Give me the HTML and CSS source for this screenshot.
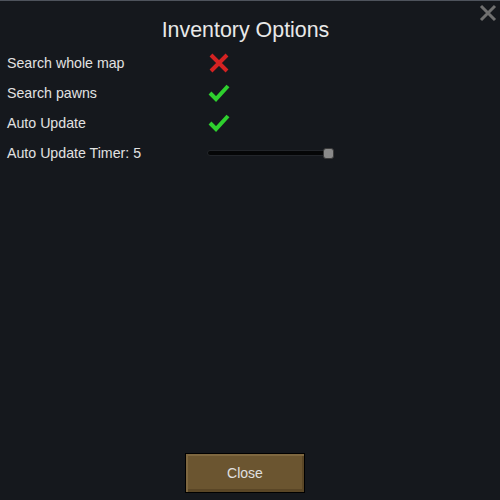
FILE: index.html
```html
<!DOCTYPE html>
<html>
<head>
<meta charset="utf-8">
<link rel="stylesheet" href="styles.css">
</head>
<body>
<div class="window">
  <svg class="close-x" viewBox="0 0 18 18" width="18" height="18"><path d="M2 2 L16 16 M16 2 L2 16" stroke="#707070" stroke-width="3" fill="none"/></svg>
  <h1 class="title">Inventory Options</h1>
  <div class="rows">
    <div class="row">
      <span class="label">Search whole map</span>
      <svg class="icon" viewBox="0 0 22 20" width="22" height="20"><path d="M3 2 L19 18 M19 2 L3 18" stroke="#d42222" stroke-width="4" fill="none"/></svg>
    </div>
    <div class="row">
      <span class="label">Search pawns</span>
      <svg class="icon" viewBox="0 0 22 20" width="22" height="20"><path d="M2 10 L8 16 L20 3" stroke="#2ed02e" stroke-width="4" fill="none"/></svg>
    </div>
    <div class="row">
      <span class="label">Auto Update</span>
      <svg class="icon" viewBox="0 0 22 20" width="22" height="20"><path d="M2 10 L8 16 L20 3" stroke="#2ed02e" stroke-width="4" fill="none"/></svg>
    </div>
    <div class="row">
      <span class="label">Auto Update Timer: 5</span>
      <div class="slider"><div class="track"></div><div class="thumb"></div></div>
    </div>
  </div>
  <div class="footer">
    <button class="btn">Close</button>
  </div>
</div>
</body>
</html>
```
FILE: styles.css
```css
html, body {
  margin: 0;
  padding: 0;
  background: #15181d;
}
body {
  font-family: "Liberation Sans", Arial, sans-serif;
  color: #e2e2e2;
}
.window {
  position: relative;
  box-sizing: border-box;
  height: 500px;
  border-top: 1px solid #4e535c;
  display: flex;
  flex-direction: column;
}
.close-x {
  position: absolute;
  top: 3px;
  right: 3px;
}
.title {
  margin: 0;
  padding: 15px 9px 0 0;
  height: 32px;
  font-size: 21.4px;
  font-weight: normal;
  text-align: center;
  line-height: 28px;
  color: #e8e8e8;
}
.rows {
  display: flex;
  flex-direction: column;
}
.row {
  display: grid;
  grid-template-columns: 200px 1fr;
  align-items: center;
  height: 30px;
  padding-left: 7px;
}
.label {
  font-size: 14.2px;
  line-height: 16px;
}
.icon {
  display: block;
  margin-left: 1px;
}
.slider {
  position: relative;
  width: 127px;
  height: 11px;
}
.track {
  position: absolute;
  left: 0;
  right: 2px;
  top: 2px;
  height: 6px;
  background: #050607;
  border: 1px solid #22252a;
  border-radius: 4px;
  box-sizing: border-box;
}
.thumb {
  position: absolute;
  right: 0;
  top: 0;
  width: 11px;
  height: 11px;
  box-sizing: border-box;
  background: #8a8a8a;
  border: 1px solid #3a3a3a;
  border-radius: 3px;
}
.footer {
  margin-top: auto;
  padding: 0 10px 7px 0;
  display: flex;
  justify-content: center;
}
.btn {
  width: 120px;
  height: 40px;
  box-sizing: border-box;
  border: 1px solid #000;
  background: #6b5530;
  box-shadow: inset 2px 2px 0 #7e6740, inset -2px -3px 0 #5a4626;
  color: #e0e0e0;
  font-family: "Liberation Sans", Arial, sans-serif;
  font-size: 14px;
  padding: 0;
}
```
